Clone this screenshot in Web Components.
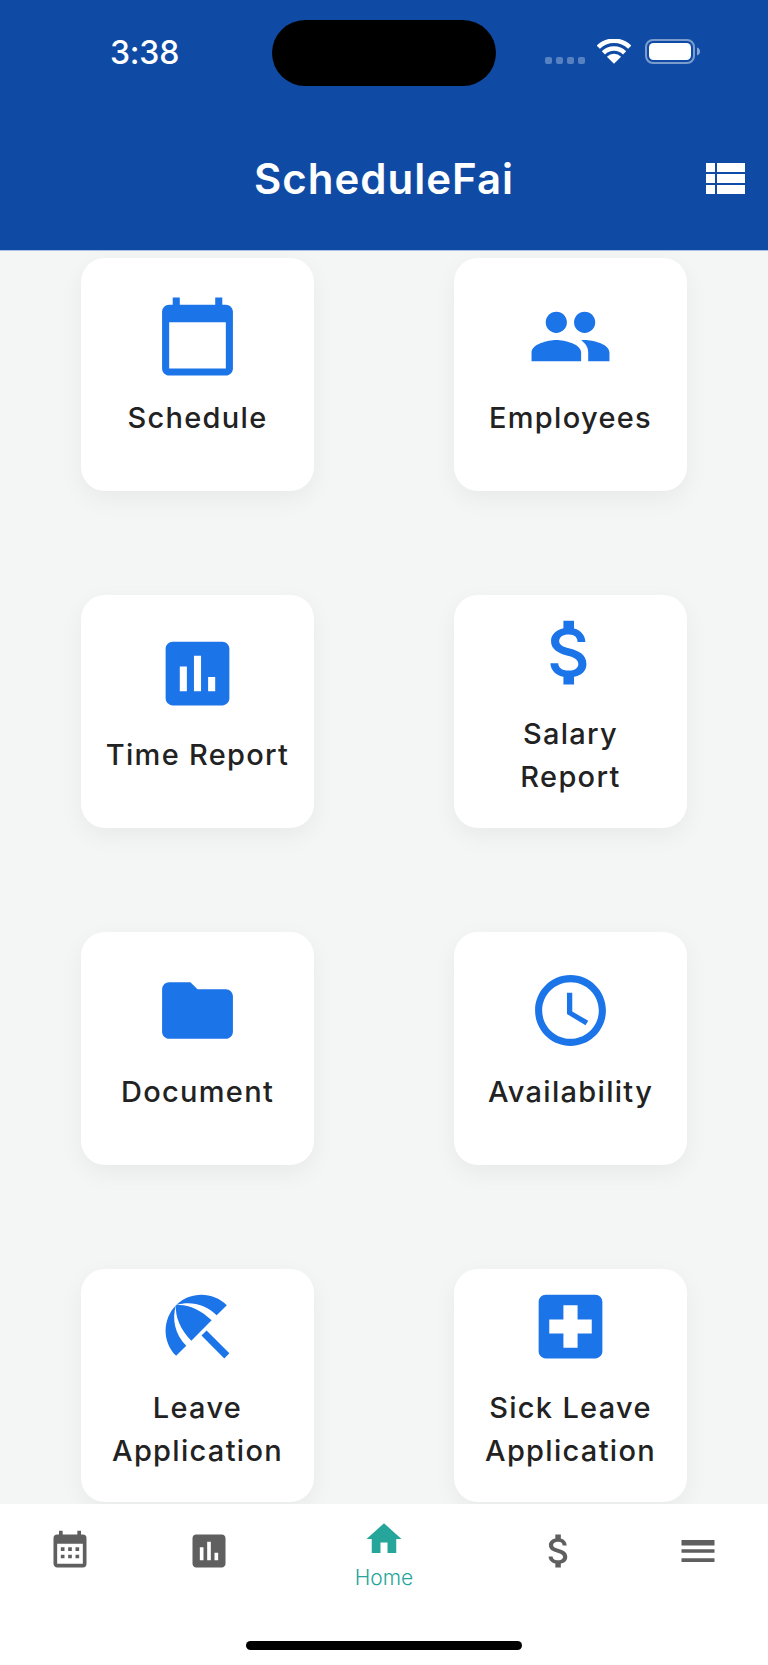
<!DOCTYPE html>
<html lang="en">
<head>
<meta charset="utf-8">
<title>ScheduleFai</title>
<style>
    html, body { margin: 0; padding: 0; background: #f4f5f5; }
    body { width: 768px; height: 1665px; overflow: hidden; }
</style>
</head>
<body>
<schedule-app></schedule-app>
<script>
const ICONS = {
    calendar: 'M20 3h-1V1h-2v2H7V1H5v2H4c-1.1 0-2 .9-2 2v16c0 1.1.9 2 2 2h16c1.1 0 2-.9 2-2V5c0-1.1-.9-2-2-2zm0 18H4V8h16v13z',
    people: 'M16 11c1.66 0 2.99-1.34 2.99-3S17.66 5 16 5c-1.66 0-3 1.34-3 3s1.34 3 3 3zm-8 0c1.66 0 2.99-1.34 2.99-3S9.66 5 8 5C6.34 5 5 6.34 5 8s1.34 3 3 3zm0 2c-2.33 0-7 1.17-7 3.5V19h14v-2.5c0-2.33-4.67-3.5-7-3.5zm8 0c-.29 0-.62.02-.97.05 1.16.84 1.97 1.97 1.97 3.45V19h6v-2.5c0-2.33-4.67-3.5-7-3.5z',
    chart: 'M19 3H5c-1.1 0-2 .9-2 2v14c0 1.1.9 2 2 2h14c1.1 0 2-.9 2-2V5c0-1.1-.9-2-2-2zM9 17H7v-7h2v7zm4 0h-2V7h2v10zm4 0h-2v-4h2v4z',
    dollar: 'M11.8 10.9c-2.27-.59-3-1.2-3-2.15 0-1.09 1.01-1.85 2.7-1.85 1.78 0 2.44.85 2.5 2.1h2.21c-.07-1.72-1.12-3.3-3.21-3.81V3h-3v2.16c-1.94.42-3.5 1.68-3.5 3.61 0 2.31 1.91 3.46 4.7 4.13 2.5.6 3 1.48 3 2.41 0 .69-.49 1.79-2.7 1.79-2.06 0-2.87-.92-2.98-2.1h-2.2c.12 2.19 1.76 3.42 3.68 3.83V21h3v-2.15c1.95-.37 3.5-1.5 3.5-3.55 0-2.84-2.43-3.81-4.7-4.4z',
    folder: 'M10 4H4c-1.1 0-1.99.9-1.99 2L2 18c0 1.1.9 2 2 2h16c1.1 0 2-.9 2-2V8c0-1.1-.9-2-2-2h-8l-2-2z',
    clock: 'M11.99 2C6.47 2 2 6.48 2 12s4.47 10 9.99 10C17.52 22 22 17.52 22 12S17.52 2 11.99 2zM12 20c-4.42 0-8-3.58-8-8s3.58-8 8-8 8 3.58 8 8-3.58 8-8 8zm.5-13H11v6l5.25 3.15.75-1.23-4.5-2.67z',
    umbrella: 'M13.127 14.56l1.43-1.43 6.44 6.443L19.57 21zm4.293-5.73l2.86-2.86c-3.95-3.95-10.35-3.96-14.3-.02 3.93-1.3 8.31-.25 11.44 2.88zM5.95 5.98c-3.94 3.95-3.93 10.35.02 14.3l2.86-2.86C5.7 14.29 4.65 9.91 5.95 5.98zm.02-.02l-.01.01c-.38 3.01 1.17 6.88 4.3 10.02l5.73-5.73c-3.13-3.13-7.01-4.68-10.02-4.3z',
    hospital: 'M19 3H5c-1.1 0-1.99.9-1.99 2L3 19c0 1.1.9 2 2 2h14c1.1 0 2-.9 2-2V5c0-1.1-.9-2-2-2zm-1 11h-4v4h-4v-4H6v-4h4V6h4v4h4v4z',
    calendarMonth: 'M9 10v2H7v-2h2m4 0v2h-2v-2h2m4 0v2h-2v-2h2m2-7a2 2 0 0 1 2 2v14a2 2 0 0 1-2 2H5c-1.11 0-2-.9-2-2V5a2 2 0 0 1 2-2h1V1h2v2h8V1h2v2h1m0 16V8H5v11h14M9 14v2H7v-2h2m4 0v2h-2v-2h2m4 0v2h-2v-2h2z',
    home: 'M10 20v-6h4v6h5v-8h3L12 3 2 12h3v8z',
    menu: 'M3 18h18v-2H3v2zm0-5h18v-2H3v2zm0-6v2h18V6H3z'
};

function iconSvg(name, size) {
    return `<svg width="${size}" height="${size}" viewBox="0 0 24 24" fill="currentColor" aria-hidden="true"><path d="${ICONS[name]}"/></svg>`;
}

class AppHeader extends HTMLElement {
    constructor() {
        super();
        this.attachShadow({ mode: 'open' });
    }

    connectedCallback() {
        this.shadowRoot.innerHTML = `
            <style>
                :host {
                    display: block;
                    height: 251px;
                    box-sizing: border-box;
                    padding-top: 20px;
                    background: #0f4ba5;
                    color: #fff;
                    border-bottom: 1px solid #a9c0e4;
                    font-family: Inter, "Liberation Sans", sans-serif;
                }
                .status {
                    display: grid;
                    grid-template-columns: 272px 224px 1fr;
                    height: 66px;
                }
                .time {
                    font-size: 32px;
                    font-weight: 500;
                    line-height: 66px;
                    padding-left: 110px;
                    letter-spacing: -0.2px;
                }
                .island {
                    background: #000;
                    border-radius: 33px;
                }
                .levels {
                    display: flex;
                    align-items: flex-start;
                    padding: 19px 0 0 49px;
                }
                .dots {
                    display: flex;
                    gap: 4px;
                    margin-top: 18px;
                    margin-right: 12px;
                }
                .dots i {
                    width: 7px;
                    height: 7px;
                    border-radius: 2px;
                    background: rgba(255, 255, 255, 0.3);
                }
                .battery { margin-left: 13.5px; display: block; }
                .wifi { display: block; }
                .title-row {
                    display: grid;
                    grid-template-columns: 1fr auto 1fr;
                    align-items: center;
                    margin-top: 62.5px;
                    height: 60px;
                }
                h1 {
                    margin: 0;
                    font-size: 42px;
                    font-weight: 600;
                    letter-spacing: 1px;
                    grid-column: 2;
                }
                .list {
                    justify-self: end;
                    margin-right: 23px;
                    display: grid;
                    grid-template-columns: 9px 28px;
                    grid-auto-rows: 9.5px;
                    gap: 1.5px 2px;
                }
                .list i { background: #fff; }
            </style>
            <div class="status">
                <div class="time">3:38</div>
                <div class="island"></div>
                <div class="levels">
                    <div class="dots"><i></i><i></i><i></i><i></i></div>
                    <svg class="wifi" width="34" height="25" viewBox="0 0 34 25" aria-hidden="true">
                        <path d="M1.3 8.2a22.2 22.2 0 0 1 31.4 0" fill="none" stroke="#fff" stroke-width="4.5"/>
                        <path d="M6.4 13.9a15 15 0 0 1 21.2 0" fill="none" stroke="#fff" stroke-width="4.5"/>
                        <path d="M17 24.8 9.9 17.7a10 10 0 0 1 14.2 0z" fill="#fff"/>
                    </svg>
                    <svg class="battery" width="56" height="25" viewBox="0 0 56 25" aria-hidden="true">
                        <rect x="1" y="1" width="48" height="23" rx="7" fill="none" stroke="#fff" stroke-opacity=".45" stroke-width="2"/>
                        <rect x="4" y="4" width="42" height="17" rx="4.5" fill="#fff"/>
                        <path d="M52 8.5c2 .6 3 2.2 3 4s-1 3.4-3 4z" fill="#fff" fill-opacity=".5"/>
                    </svg>
                </div>
            </div>
            <div class="title-row">
                <h1>ScheduleFai</h1>
                <div class="list"><i></i><i></i><i></i><i></i><i></i><i></i></div>
            </div>
        `;
    }
}

class MenuCard extends HTMLElement {
    constructor() {
        super();
        this.attachShadow({ mode: 'open' });
    }

    connectedCallback() {
        const icon = this.getAttribute('icon');
        this.shadowRoot.innerHTML = `
            <style>
                :host {
                    display: flex;
                    flex-direction: column;
                    align-items: center;
                    justify-content: center;
                    box-sizing: border-box;
                    width: 233px;
                    height: 233px;
                    padding: 0 17px 16px;
                    background: #fff;
                    border-radius: 24px;
                    box-shadow: 0 8px 24px rgba(0, 0, 0, 0.05);
                }
                svg { display: block; color: #1c74e9; flex: none; }
                .label {
                    margin-top: 17px;
                    font-size: 29px;
                    font-weight: 500;
                    line-height: 43px;
                    letter-spacing: 1.3px;
                    text-align: center;
                    color: #222;
                }
            </style>
            ${iconSvg(icon, 85)}
            <div class="label"><slot></slot></div>
        `;
    }
}

class MenuGrid extends HTMLElement {
    constructor() {
        super();
        this.attachShadow({ mode: 'open' });
    }

    connectedCallback() {
        this.shadowRoot.innerHTML = `
            <style>
                :host {
                    display: grid;
                    grid-template-columns: 233px 233px;
                    justify-content: center;
                    column-gap: 140px;
                    row-gap: 104px;
                    align-content: start;
                    height: 1253px;
                    box-sizing: border-box;
                    padding-top: 7px;
                    overflow: hidden;
                    background: #f4f5f5;
                    font-family: Inter, "Liberation Sans", sans-serif;
                }
            </style>
            <slot></slot>
        `;
    }
}

class TabItem extends HTMLElement {
    constructor() {
        super();
        this.attachShadow({ mode: 'open' });
    }

    connectedCallback() {
        const active = this.hasAttribute('active');
        this.shadowRoot.innerHTML = `
            <style>
                :host {
                    display: flex;
                    flex: ${active ? 1.5 : 1};
                    flex-direction: column;
                    align-items: center;
                    padding-top: ${active ? 14 : 25}px;
                    color: ${active ? '#26a69a' : '#5f5f5f'};
                }
                svg { display: block; }
                .label {
                    font-size: 21px;
                    font-weight: 300;
                    line-height: 25px;
                    margin-top: 4.5px;
                }
            </style>
            ${iconSvg(this.getAttribute('icon'), active ? 42 : 44)}
            <div class="label"><slot></slot></div>
        `;
    }
}

class TabBar extends HTMLElement {
    constructor() {
        super();
        this.attachShadow({ mode: 'open' });
    }

    connectedCallback() {
        this.shadowRoot.innerHTML = `
            <style>
                :host {
                    display: block;
                    height: 161px;
                    background: #fff;
                    font-family: Inter, "Liberation Sans", sans-serif;
                }
                .tabs { display: flex; height: 137px; }
                .indicator {
                    width: 276px;
                    height: 9px;
                    margin: 0 auto;
                    border-radius: 5px;
                    background: #000;
                }
            </style>
            <div class="tabs"><slot></slot></div>
            <div class="indicator"></div>
        `;
    }
}

class ScheduleApp extends HTMLElement {
    constructor() {
        super();
        this.attachShadow({ mode: 'open' });
    }

    connectedCallback() {
        this.shadowRoot.innerHTML = `
            <style>
                :host { display: block; width: 768px; height: 1665px; overflow: hidden; }
            </style>
            <app-header></app-header>
            <menu-grid>
                <menu-card icon="calendar">Schedule</menu-card>
                <menu-card icon="people">Employees</menu-card>
                <menu-card icon="chart">Time Report</menu-card>
                <menu-card icon="dollar">Salary Report</menu-card>
                <menu-card icon="folder">Document</menu-card>
                <menu-card icon="clock">Availability</menu-card>
                <menu-card icon="umbrella">Leave Application</menu-card>
                <menu-card icon="hospital">Sick Leave Application</menu-card>
            </menu-grid>
            <tab-bar>
                <tab-item icon="calendarMonth"></tab-item>
                <tab-item icon="chart"></tab-item>
                <tab-item icon="home" active>Home</tab-item>
                <tab-item icon="dollar"></tab-item>
                <tab-item icon="menu"></tab-item>
            </tab-bar>
        `;
    }
}

customElements.define('app-header', AppHeader);
customElements.define('menu-card', MenuCard);
customElements.define('menu-grid', MenuGrid);
customElements.define('tab-item', TabItem);
customElements.define('tab-bar', TabBar);
customElements.define('schedule-app', ScheduleApp);
</script>
</body>
</html>
